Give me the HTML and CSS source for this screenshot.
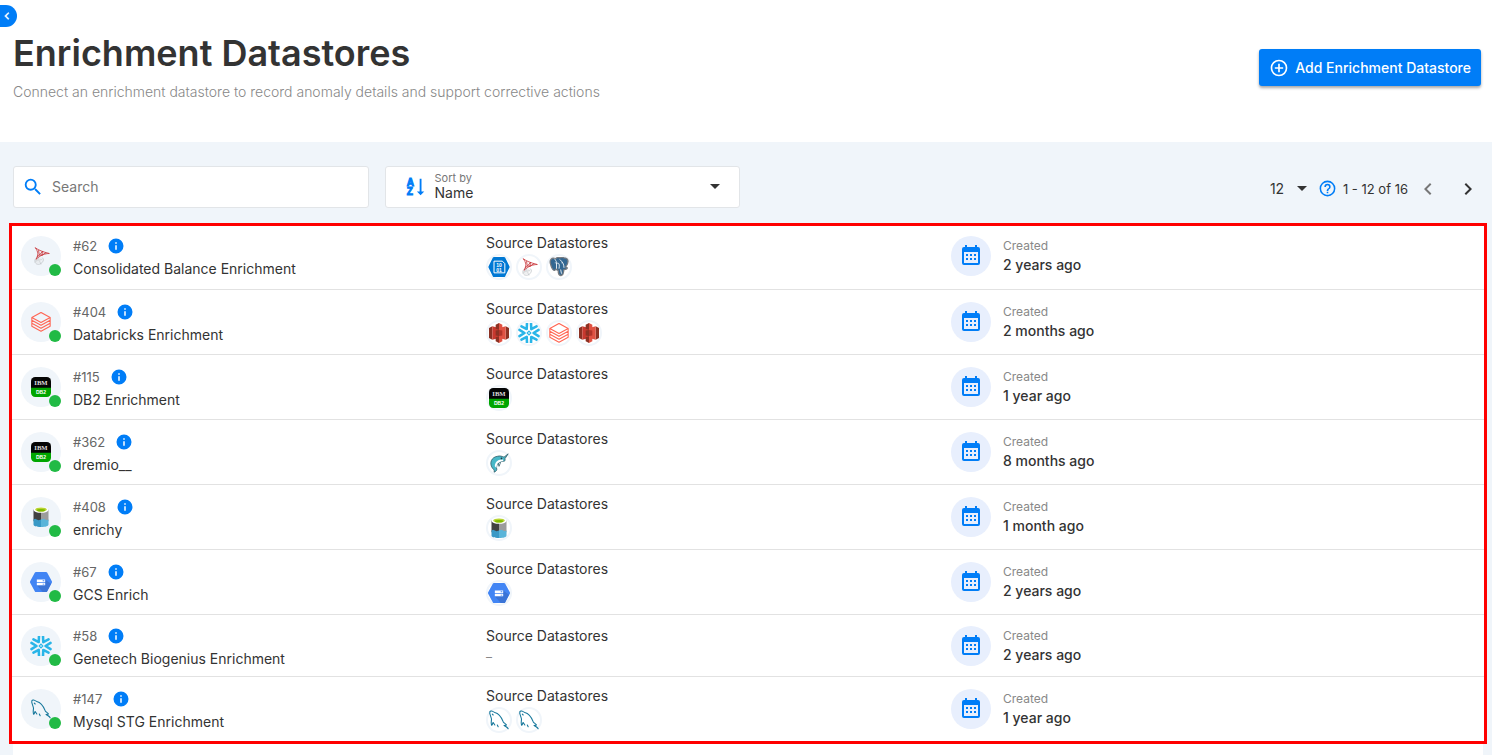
FILE: index.html
```html
<!DOCTYPE html>
<html lang="en">
<head>
    <meta charset="UTF-8">
    <meta name="viewport" content="width=device-width, initial-scale=1.0">
    <title>Enrichment Datastores</title>
    <link rel="stylesheet" href="styles.css">
</head>
<body>
    <!-- icon set -->
    <svg class="sprite" aria-hidden="true">
        <symbol id="plus" viewBox="0 0 24 24"><path d="M12,20C7.59,20 4,16.41 4,12C4,7.59 7.59,4 12,4C16.41,4 20,7.59 20,12C20,16.41 16.41,20 12,20M12,2A10,10 0 0,0 2,12A10,10 0 0,0 12,22A10,10 0 0,0 22,12A10,10 0 0,0 12,2M13,7H11V11H7V13H11V17H13V13H17V11H13V7Z"/></symbol>
        <symbol id="magnify" viewBox="0 0 24 24"><path d="M9.5,3A6.5,6.5 0 0,1 16,9.5C16,11.11 15.41,12.59 14.44,13.73L14.71,14H15.5L20.5,19L19,20.5L14,15.5V14.71L13.73,14.44C12.59,15.41 11.11,16 9.5,16A6.5,6.5 0 0,1 3,9.5A6.5,6.5 0 0,1 9.5,3M9.5,5C7,5 5,7 5,9.5C5,12 7,14 9.5,14C12,14 14,12 14,9.5C14,7 12,5 9.5,5Z"/></symbol>
        <symbol id="help" viewBox="0 0 24 24"><path d="M11,18H13V16H11V18M12,2A10,10 0 0,0 2,12A10,10 0 0,0 12,22A10,10 0 0,0 22,12A10,10 0 0,0 12,2M12,20C7.59,20 4,16.41 4,12C4,7.59 7.59,4 12,4C16.41,4 20,7.59 20,12C20,16.41 16.41,20 12,20M12,6A4,4 0 0,0 8,10H10A2,2 0 0,1 12,8A2,2 0 0,1 14,10C14,12 11,11.75 11,15H13C13,12.75 16,12.5 16,10A4,4 0 0,0 12,6Z"/></symbol>
        <symbol id="info" viewBox="0 0 24 24"><path d="M13,9H11V7H13M13,17H11V11H13M12,2A10,10 0 0,0 2,12A10,10 0 0,0 12,22A10,10 0 0,0 22,12A10,10 0 0,0 12,2Z"/></symbol>
        <symbol id="left" viewBox="0 0 24 24"><path d="M15.41,16.58L10.83,12L15.41,7.41L14,6L8,12L14,18L15.41,16.58Z"/></symbol>
        <symbol id="right" viewBox="0 0 24 24"><path d="M8.59,16.58L13.17,12L8.59,7.41L10,6L16,12L10,18L8.59,16.58Z"/></symbol>
        <symbol id="sort" viewBox="0 0 24 24">
            <text class="sort-letter" x="2" y="11">A</text>
            <text class="sort-letter" x="2" y="21">Z</text>
            <path d="M16 3h2v14h3l-4 4-4-4h3z"/>
        </symbol>
        <symbol id="calendar" viewBox="0 0 24 24"><path fill-rule="evenodd" d="M6 1h2v2h8V1h2v2h1a2 2 0 0 1 2 2v14a2 2 0 0 1-2 2H5a2 2 0 0 1-2-2V5a2 2 0 0 1 2-2h1zM5 8v11h14V8zM7 10h2v2H7zm4 0h2v2h-2zm4 0h2v2h-2zM7 14h2v2H7zm4 0h2v2h-2zm4 0h2v2h-2z"/></symbol>

        <symbol id="sqlserver" viewBox="0 0 24 24">
            <g fill="none" stroke="#c3c7ca" stroke-width="1"><path d="M7 14c-3 2-3 5-1 7s6 1 8-2 0-5-1-5M8 14l4 8M5 18l8-2M10 13l-5 7"/></g>
            <path fill="#e2e4e6" d="M7 15l5-1 1 4-5 4-3-2z" opacity=".6"/>
            <g fill="none" stroke="#c9373c" stroke-width="1" stroke-linejoin="round"><path d="M5 2c4 3 9 5 17 7-5 0-11 2-16 7 3-5 3-9-1-14zM9 5l1 6 4-5-1 5 5-3M7 13l3-2 4 0"/></g>
        </symbol>
        <symbol id="databricks" viewBox="0 0 24 24"><g fill="none" stroke="#ff6654" stroke-width="1.3" stroke-linejoin="round"><path d="M1 6.500l11-6 11 6-11 6zM1 6.500V10l11 6 11-6V6.500M1 10v3.500l11 6 11-6V10M1 13.500V17l11 6 11-6v-3.500"/></g></symbol>
        <symbol id="db2" viewBox="0 0 24 24">
            <path fill="#00a600" d="M0 12h24v7a5 5 0 0 1-5 5H5a5 5 0 0 1-5-5z"/>
            <path fill="#050505" d="M0 13V5a5 5 0 0 1 5-5h14a5 5 0 0 1 5 5v8z"/>
            <text class="ibm" x="12" y="10">IBM</text>
            <text class="db-name" x="12" y="20">DB2</text>
        </symbol>
        <symbol id="lake" viewBox="0 0 24 24">
            <path fill="#414141" d="M3 3l9 3v11H3z"/><path fill="#9c9c9c" d="M21 3l-9 3v11h9z"/>
            <path fill="#3999c6" d="M3 15l2-1 4 2 3-1v9c-6 0-9-1-9-3z"/>
            <path fill="#59b4d9" d="M12 15l3-1 4 2 2-1v6c0 2-3 3-9 3z"/>
            <ellipse cx="12" cy="3.500" rx="9" ry="3.500" fill="#fff"/><ellipse cx="12" cy="3" rx="7" ry="2.500" fill="#b8d432"/><ellipse cx="12" cy="4" rx="5" ry="1.500" fill="#7fba00"/>
        </symbol>
        <symbol id="gcs" viewBox="0 0 26 24">
            <path fill="#4285f4" d="M7 0h12q1 0 1.500 1L26 11q.5 1 0 2l-5.500 10q-.5 1-1.500 1H7q-1 0-1.500-1L0 13q-.5-1 0-2L5.500 1Q6 0 7 0z"/>
            <path fill="#3b74d6" d="M18 9l7 5-5 10h-5l-7-8h10z"/>
            <path fill="#fff" d="M8 9h10v3H8zM8 13h10v3H8z"/><path fill="#4285f4" d="M15 10h2v1h-2zM15 14h2v1h-2z"/>
        </symbol>
        <symbol id="snowflake" viewBox="1 1 22 22">
            <g fill="none" stroke="#29b5e8" stroke-width="2.800" stroke-linecap="round" stroke-linejoin="round">
                <path id="arm" d="M1.500 8.500L7 12l-5.500 3.500"/>
                <use href="#arm" transform="rotate(60 12 12)"/><use href="#arm" transform="rotate(120 12 12)"/><use href="#arm" transform="rotate(180 12 12)"/><use href="#arm" transform="rotate(240 12 12)"/><use href="#arm" transform="rotate(300 12 12)"/>
            </g>
            <path fill="none" stroke="#29b5e8" stroke-width="1.300" d="M12 10l2 2-2 2-2-2z"/>
        </symbol>
        <symbol id="mysql" viewBox="0 0 24 24"><path fill="none" stroke="#15779b" stroke-width="1.300" stroke-linecap="round" stroke-linejoin="round" d="M7 18l-2-3c-1 1-1 4-2 3-1-2 0-5 0-7S0 4 1 2s4 0 6 1c5 1 8 6 10 11 1 2 3 2 4 4l-3 .5c1 1 4 2 5 4M4 5l1 1M10 18l1 2"/></symbol>
        <symbol id="blob" viewBox="0 0 26 24">
            <path fill="#0078d4" d="M7 0h12q1 0 1.500 1l5 10q.5 1 0 2l-5 10q-.5 1-1.500 1H7q-1 0-1.500-1l-5-10q-.5-1 0-2l5-10Q6 0 7 0z"/>
            <path fill="none" stroke="#fff" stroke-width="1.200" d="M7 5h10l3 3v11H7z"/>
            <text class="bits" x="13" y="12">10</text><text class="bits" x="13" y="18">01</text>
        </symbol>
        <symbol id="postgres" viewBox="0 0 24 24">
            <path fill="#336791" stroke="#777b80" stroke-width="1.500" d="M8 2C3 0 0 4 2 9c1 4 3 8 5 7l2-2c0 2 1 2 2 2 0 4 1 7 4 6s2-4 3-7c2 0 4-1 4-2-1-1-2 0-2-1 4-5 4-11-2-11-2-1-4 0-5 0-2-1-4 0-5 1z"/>
            <path fill="none" stroke="#fff" stroke-width="1" d="M9 14V7c0-3-2-3-2-5M9 8c3-2 4 1 3 6M13 3c3 3 5 5 5 10M15 7h1M8 7H7M14 15l1 5"/>
        </symbol>
        <symbol id="s3" viewBox="0 0 24 24">
            <path fill="#8c3123" d="M0 6l4-2v16l-4-2z"/><path fill="#c8382e" d="M4 4l8 2v12l-8 2z"/>
            <path fill="#8c3123" d="M24 6l-4-2v16l4-2z"/><path fill="#e05243" d="M20 4l-8 2v12l8 2z"/>
            <path fill="#8c3123" d="M12 0L8 2v5l4 1zM12 24l-4-2v-5l4-1z"/><path fill="#e05243" d="M12 0l4 2v5l-4 1zM12 24l4-2v-5l-4-1z"/>
            <path fill="#8c3123" d="M8 9l4-.5v7L8 15z"/><path fill="#b0342a" d="M16 9l-4-.5v7l4-.5z"/>
        </symbol>
        <symbol id="narwhal" viewBox="0 0 24 24">
            <path fill="#48b8c8" stroke="#34616d" stroke-width="1" stroke-linejoin="round" d="M6 23c1-2 0-3-2-5-4-6-1-13 6-14 3-1 6 0 8 1l5-4-4 6c1 2 0 3-2 3-5 0-8 4-8 8 1 2 0 4-3 5z"/>
            <path fill="#fff" d="M17 8c-6-1-10 3-10 8l2 2c0-5 3-8 8-8z"/><path fill="none" stroke="#34616d" stroke-width="1" d="M11 12l1 4 2-5"/><circle cx="15" cy="6.500" r="1" fill="#234"/>
        </symbol>
    </svg>

    <header class="page-header">
        <button class="drawer-toggle" type="button" aria-label="Toggle menu"><svg><use href="#left"/></svg></button>
        <div>
            <h1>Enrichment Datastores</h1>
            <p>Connect an enrichment datastore to record anomaly details and support corrective actions</p>
        </div>
        <button class="add-button" type="button"><svg><use href="#plus"/></svg>Add Enrichment Datastore</button>
    </header>

    <main>
        <div class="toolbar">
            <label class="field">
                <svg><use href="#magnify"/></svg>
                <input type="search" placeholder="Search" aria-label="Search">
            </label>
            <div class="field sort-field">
                <svg><use href="#sort"/></svg>
                <div class="sort-control">
                    <label for="sort-by">Sort by</label>
                    <select id="sort-by"><option>Name</option></select>
                </div>
            </div>
            <nav class="pagination" aria-label="Pagination">
                <select class="page-size" aria-label="Items per page"><option>12</option></select>
                <svg class="help"><use href="#help"/></svg>
                <span>1 - 12 of 16</span>
                <button type="button" aria-label="Previous page" disabled><svg><use href="#left"/></svg></button>
                <button type="button" aria-label="Next page"><svg><use href="#right"/></svg></button>
            </nav>
        </div>

        <section class="datastores">
            <article class="row">
                <div class="store">
                    <div class="avatar"><svg><use href="#sqlserver"/></svg></div>
                    <div><div class="store-id">#62 <svg><use href="#info"/></svg></div><div class="name">Consolidated Balance Enrichment</div></div>
                </div>
                <div class="sources"><div class="name">Source Datastores</div>
                    <div class="chips"><span class="chip"><svg><use href="#blob"/></svg></span><span class="chip"><svg><use href="#sqlserver"/></svg></span><span class="chip"><svg><use href="#postgres"/></svg></span></div>
                </div>
                <div class="created"><div class="date-icon"><svg><use href="#calendar"/></svg></div><div><div class="caption">Created</div><div class="ago">2 years ago</div></div></div>
            </article>
            <article class="row">
                <div class="store">
                    <div class="avatar"><svg><use href="#databricks"/></svg></div>
                    <div><div class="store-id">#404 <svg><use href="#info"/></svg></div><div class="name">Databricks Enrichment</div></div>
                </div>
                <div class="sources"><div class="name">Source Datastores</div>
                    <div class="chips"><span class="chip"><svg><use href="#s3"/></svg></span><span class="chip"><svg><use href="#snowflake"/></svg></span><span class="chip"><svg><use href="#databricks"/></svg></span><span class="chip"><svg><use href="#s3"/></svg></span></div>
                </div>
                <div class="created"><div class="date-icon"><svg><use href="#calendar"/></svg></div><div><div class="caption">Created</div><div class="ago">2 months ago</div></div></div>
            </article>
            <article class="row">
                <div class="store">
                    <div class="avatar"><svg><use href="#db2"/></svg></div>
                    <div><div class="store-id">#115 <svg><use href="#info"/></svg></div><div class="name">DB2 Enrichment</div></div>
                </div>
                <div class="sources"><div class="name">Source Datastores</div>
                    <div class="chips"><span class="chip"><svg><use href="#db2"/></svg></span></div>
                </div>
                <div class="created"><div class="date-icon"><svg><use href="#calendar"/></svg></div><div><div class="caption">Created</div><div class="ago">1 year ago</div></div></div>
            </article>
            <article class="row">
                <div class="store">
                    <div class="avatar"><svg><use href="#db2"/></svg></div>
                    <div><div class="store-id">#362 <svg><use href="#info"/></svg></div><div class="name">dremio__</div></div>
                </div>
                <div class="sources"><div class="name">Source Datastores</div>
                    <div class="chips"><span class="chip"><svg><use href="#narwhal"/></svg></span></div>
                </div>
                <div class="created"><div class="date-icon"><svg><use href="#calendar"/></svg></div><div><div class="caption">Created</div><div class="ago">8 months ago</div></div></div>
            </article>
            <article class="row">
                <div class="store">
                    <div class="avatar"><svg><use href="#lake"/></svg></div>
                    <div><div class="store-id">#408 <svg><use href="#info"/></svg></div><div class="name">enrichy</div></div>
                </div>
                <div class="sources"><div class="name">Source Datastores</div>
                    <div class="chips"><span class="chip"><svg><use href="#lake"/></svg></span></div>
                </div>
                <div class="created"><div class="date-icon"><svg><use href="#calendar"/></svg></div><div><div class="caption">Created</div><div class="ago">1 month ago</div></div></div>
            </article>
            <article class="row">
                <div class="store">
                    <div class="avatar"><svg><use href="#gcs"/></svg></div>
                    <div><div class="store-id">#67 <svg><use href="#info"/></svg></div><div class="name">GCS Enrich</div></div>
                </div>
                <div class="sources"><div class="name">Source Datastores</div>
                    <div class="chips"><span class="chip"><svg><use href="#gcs"/></svg></span></div>
                </div>
                <div class="created"><div class="date-icon"><svg><use href="#calendar"/></svg></div><div><div class="caption">Created</div><div class="ago">2 years ago</div></div></div>
            </article>
            <article class="row no-sources">
                <div class="store">
                    <div class="avatar"><svg><use href="#snowflake"/></svg></div>
                    <div><div class="store-id">#58 <svg><use href="#info"/></svg></div><div class="name">Genetech Biogenius Enrichment</div></div>
                </div>
                <div class="sources"><div class="name">Source Datastores</div>
                    <div class="none">–</div>
                </div>
                <div class="created"><div class="date-icon"><svg><use href="#calendar"/></svg></div><div><div class="caption">Created</div><div class="ago">2 years ago</div></div></div>
            </article>
            <article class="row">
                <div class="store">
                    <div class="avatar"><svg><use href="#mysql"/></svg></div>
                    <div><div class="store-id">#147 <svg><use href="#info"/></svg></div><div class="name">Mysql STG Enrichment</div></div>
                </div>
                <div class="sources"><div class="name">Source Datastores</div>
                    <div class="chips"><span class="chip"><svg><use href="#mysql"/></svg></span><span class="chip"><svg><use href="#mysql"/></svg></span></div>
                </div>
                <div class="created"><div class="date-icon"><svg><use href="#calendar"/></svg></div><div><div class="caption">Created</div><div class="ago">1 year ago</div></div></div>
            </article>
        </section>
        <div class="list-end"></div>
    </main>
</body>
</html>
```

FILE: styles.css
```css
* {
    box-sizing: border-box;
}
body {
    margin: 0;
    min-height: 100vh;
    display: flex;
    flex-direction: column;
    font-family: Inter, "Liberation Sans", sans-serif;
    font-size: 14px;
    color: #333;
    background: #f0f5fa;
}
button, input, select {
    font: inherit;
    color: inherit;
    border: none;
    background: none;
    padding: 0;
}
svg {
    display: block;
    flex: none;
    fill: currentColor;
}
.sprite {
    display: none;
}
.page-header {
    position: relative;
    display: flex;
    justify-content: space-between;
    align-items: flex-start;
    padding: 29px 11px 40px 13px;
    background: #fff;
}
.page-header h1 {
    margin: 0;
    font-size: 36px;
    line-height: 48px;
    font-weight: 600;
}
.page-header p {
    margin: 5px 0 0;
    line-height: 20px;
    font-weight: 300;
    color: #888;
}
.drawer-toggle {
    position: absolute;
    left: 0;
    top: 5px;
    width: 17px;
    height: 22px;
    border-radius: 0 11px 11px 0;
    background: #007df7;
    color: #fff;
}
.drawer-toggle svg {
    width: 14px;
    height: 18px;
    stroke: #fff;
}
.add-button {
    display: flex;
    align-items: center;
    gap: 6px;
    margin-top: 20px;
    padding: 0 10px;
    height: 37px;
    border-radius: 3px;
    background: #007df7;
    color: #fff;
    font-weight: 500;
    box-shadow: 0 2px 3px rgba(0, 0, 0, 0.35);
}
.add-button svg {
    width: 20px;
    height: 20px;
}
main {
    flex: 1;
    display: flex;
    flex-direction: column;
    padding: 24px 5px 0 9px;
}
.toolbar {
    display: grid;
    grid-template-columns: repeat(4, 1fr);
    gap: 16px;
    padding: 0 4px;
    margin-bottom: 15px;
}
.field {
    display: flex;
    align-items: center;
    gap: 8px;
    height: 42px;
    padding: 0 8px;
    background: #fff;
    border: 1px solid #e2e5e8;
    border-radius: 3px;
}
.field svg {
    width: 22px;
    height: 22px;
    color: #007df7;
}
.field input {
    flex: 1;
    min-width: 0;
    padding-bottom: 2px;
    outline: none;
}
.field input::placeholder {
    color: #777;
}
.sort-field {
    padding: 0 19px;
}
.sort-letter {
    font-family: "Liberation Sans", sans-serif;
    font-size: 11px;
    font-weight: 700;
    stroke: currentColor;
    stroke-width: 1px;
}
.sort-control {
    flex: 1;
    padding-bottom: 2px;
}
.sort-control label {
    display: block;
    font-size: 11px;
    line-height: 12px;
    color: #777;
}
.sort-control select {
    width: 100%;
    line-height: 17px;
    background-position: right top;
}
select {
    appearance: none;
    background: url("data:image/svg+xml,%3Csvg xmlns='http://www.w3.org/2000/svg' width='10' height='5'%3E%3Cpath d='M0 0h10L5 5z' fill='%23333'/%3E%3C/svg%3E") no-repeat right center;
}
.pagination {
    grid-column: span 2;
    display: flex;
    justify-content: flex-end;
    align-items: center;
    padding: 3px 3px 0 0;
}
.page-size {
    width: 37px;
    margin-right: 11px;
}
.pagination .help {
    width: 19px;
    height: 19px;
    margin-right: 6px;
    color: #007df7;
}
.pagination span {
    font-size: 13px;
}
.pagination button {
    width: 24px;
    margin-left: 8px;
}
.pagination button + button {
    margin-left: 16px;
}
.pagination button svg {
    width: 24px;
    height: 24px;
}
.pagination button:disabled {
    color: #777;
}
.datastores {
    border: 3px solid #f00;
    background: #fff;
}
.row {
    display: grid;
    grid-template-columns: 1fr 1fr 1fr;
    height: 65px;
    padding: 10px 68px 0 9px;
    border-bottom: 1px solid #e2e2e2;
}
.row:first-child {
    height: 64px;
    padding-top: 8px;
}
.row:last-child {
    height: 64px;
    border-bottom: none;
}
.no-sources {
    height: 62px;
    padding-top: 9px;
}
.no-sources .sources {
    padding-top: 3px;
}
.store, .created {
    display: flex;
    align-items: flex-start;
    gap: 12px;
    padding-top: 2px;
}
.avatar, .date-icon {
    position: relative;
    display: flex;
    align-items: center;
    justify-content: center;
    width: 40px;
    height: 40px;
    border-radius: 50%;
    background: #f0f5fa;
}
.avatar svg {
    width: 22px;
    height: 20px;
}
/* connection status */
.avatar::after {
    content: "";
    position: absolute;
    right: 0;
    bottom: 0;
    width: 12px;
    height: 12px;
    border-radius: 50%;
    background: #21ba45;
}
.store-id {
    display: flex;
    align-items: center;
    gap: 10px;
    height: 20px;
    font-size: 13px;
    color: #666;
}
.store-id svg {
    width: 18px;
    height: 18px;
    color: #007df7;
}
.name {
    line-height: 18px;
}
.store .name {
    margin-top: 4px;
}
.chips {
    display: flex;
    gap: 4px;
    margin-top: 2px;
}
.chip {
    display: flex;
    align-items: center;
    justify-content: center;
    width: 26px;
    height: 26px;
    border: 2px solid #f0f5fa;
    border-radius: 50%;
}
.chip svg {
    width: 22px;
    height: 20px;
}
.none {
    line-height: 24px;
    font-size: 12px;
    color: #888;
}
.date-icon {
    background: #e8effd;
    color: #007df7;
}
.date-icon svg {
    width: 24px;
    height: 24px;
}
.caption {
    height: 20px;
    line-height: 20px;
    font-size: 12px;
    color: #888;
}
.ago {
    line-height: 18px;
    font-weight: 500;
}
.ibm, .db-name, .bits {
    font-family: "Liberation Serif", serif;
    font-weight: 700;
    font-size: 8px;
    fill: #ddd;
    text-anchor: middle;
}
.db-name, .bits {
    font-family: "Liberation Sans", sans-serif;
    font-size: 6px;
    fill: #fff;
}
/* the white sheet goes on below the last row */
.list-end {
    flex: 1;
    margin: 0 4px;
    background: #fff;
}
```
